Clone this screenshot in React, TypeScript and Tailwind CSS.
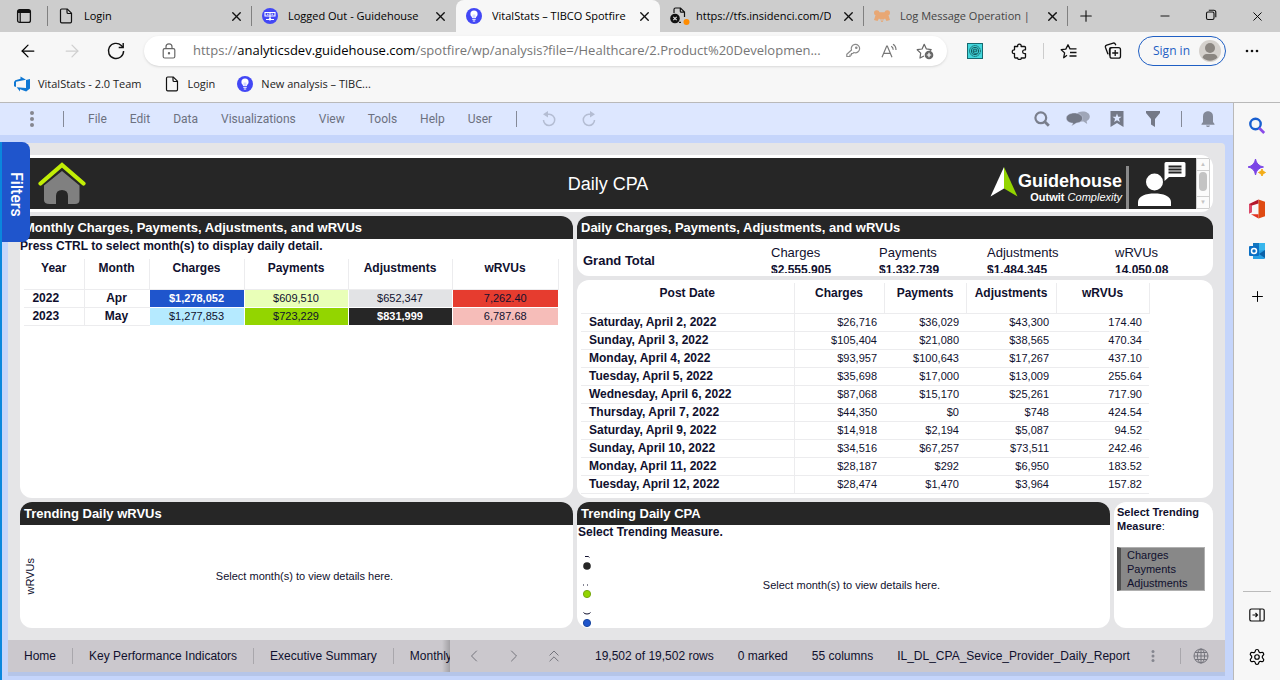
import React from "react";
import { ArrowLeft, ArrowRight, ChevronLeft, ChevronRight, ChevronsUp, Plus, Settings, X, Minus } from "lucide-react";

const UI = "font-['Open_Sans','Noto_Sans',sans-serif]";
const ARIAL = "font-['Liberation_Sans',Arial,sans-serif]";

function PageIcon() {
  return (
    <svg width="16" height="16" viewBox="0 0 16 16" fill="none" stroke="#111" strokeWidth="1.2">
      <path d="M2.5 2.2q0-1.2 1.200-1.200h5.600l4.200 4.200v8.300q0 1.300-1.200 1.300H3.700q-1.200 0-1.200-1.300z" />
      <path d="M9 1v3.200q0 1.300 1.200 1.300h3.300" />
    </svg>
  );
}

function BulbIcon() {
  return (
    <svg width="16" height="16" viewBox="0 0 16 16">
      <circle cx="8" cy="8" r="8" fill="#4247f5" />
      <path d="M8 2.600a3.600 3.600 0 0 0-3.600 3.600c0 1.800 1.600 2.300 1.700 3.900h3.800c.1-1.600 1.700-2.100 1.700-3.900A3.600 3.600 0 0 0 8 2.600z" fill="#fff" />
      <path d="M6.300 11.300h3.400M6.800 13h2.400" stroke="#fff" strokeWidth="1" />
      <path d="M7.200 9.800V6.500M8.800 9.800V6.500" stroke="#9ca0fa" strokeWidth=".6" />
    </svg>
  );
}

function NetworkIcon() {
  return (
    <svg width="16" height="16" viewBox="0 0 16 16">
      <circle cx="8" cy="8" r="8" fill="#4247f5" />
      <path d="M3 4.500h10v3.500H3zM8 4.500V11M4 11.500h8" fill="none" stroke="#fff" strokeWidth="1.100" />
      <path d="M5 6.200h1.500M9.500 6.200H11" stroke="#fff" strokeWidth="1" />
      <circle cx="8" cy="11.300" r="1.300" fill="#fff" />
    </svg>
  );
}

function BrokenPageIcon() {
  return (
    <svg width="20" height="18" viewBox="0 0 20 18" fill="none" className="-mr-1">
      <path d="M4 6V2.500Q4 1 5.500 1h5l4 4v5M10.300 1v3.200q0 1 1 1h3.200" stroke="#111" strokeWidth="1.200" />
      <path d="M9 15.400h2" stroke="#111" strokeWidth="1.200" />
      <circle cx="5" cy="11.500" r="4.800" fill="#111" />
      <path d="M3.300 9.800l3.400 3.400M6.700 9.800l-3.400 3.400" stroke="#ddd" strokeWidth="1.200" />
      <circle cx="16.500" cy="15" r="3" fill="#ff8c00" />
    </svg>
  );
}

function BearIcon() {
  return (
    <svg width="16" height="12" viewBox="0 0 16 12" fill="#e8a774">
      <path d="M0 3Q0 0 3 .3 5 .5 5.500 2.200h5Q11 .5 13 .3 16 0 16 3q0 1.700-1.500 2.300L16 10l-3.500 1-1.500-2.600-1.200 1.100H6.200L5 8.400 3.500 11 0 10l1.500-4.700Q0 4.700 0 3z" />
      <path d="M6.500 10.500h3L8.500 12h-1z" />
    </svg>
  );
}

type TabProps = { icon: React.ReactNode; title: string; active?: boolean; divider?: boolean; muted?: boolean };

function BrowserTab({ icon, title, active, divider, muted }: TabProps) {
  return (
    <div className={"relative flex h-8 min-w-0 max-w-[204px] flex-1 items-center gap-2.5 pl-2.5 pr-2 " + (active ? "rounded-t-lg bg-[#f7f7f7]" : "")}>
      <span className="flex w-4 shrink-0 justify-center">{icon}</span>
      <a href="#tab" className={"min-w-0 flex-1 overflow-hidden whitespace-nowrap text-[11px] " + (muted ? "text-[#444]" : "text-black")}>{title}</a>
      <button aria-label={"Close " + title} className="flex shrink-0"><X size={15} strokeWidth={2.2} color="#111" /></button>
      {divider && <span className="absolute right-0 top-1.5 h-5 w-px bg-[#808080]" />}
    </div>
  );
}

function TabStrip() {
  return (
    <div className="flex h-8 items-center bg-[#cdcdcd]">
      <button aria-label="Tab actions" className="flex w-[47px] shrink-0 justify-center">
        <svg width="16" height="16" viewBox="0 0 16 16" fill="none" stroke="#111">
          <rect x="1.600" y="1.600" width="12.800" height="12.800" rx="2" strokeWidth="1.300" />
          <path d="M2 3.500h12" strokeWidth="3" />
          <path d="M4.200 4v10" strokeWidth="1.200" />
        </svg>
      </button>
      <span className="h-5 w-px bg-[#808080]" />
      <div className="flex min-w-0 flex-1">
        <BrowserTab icon={<PageIcon />} title="Login" divider />
        <BrowserTab icon={<NetworkIcon />} title="Logged Out - Guidehouse" />
        <BrowserTab icon={<BulbIcon />} title="VitalStats – TIBCO Spotfire" active />
        <BrowserTab icon={<BrokenPageIcon />} title="https://tfs.insidenci.com/D" divider />
        <BrowserTab icon={<BearIcon />} title="Log Message Operation |" divider muted />
        <button aria-label="New tab" className="flex w-9 items-center justify-center"><Plus size={18} strokeWidth={1.500} color="#111" /></button>
      </div>
      <div className="flex">
        <button aria-label="Minimize" className="flex w-[46px] justify-center"><Minus size={14} strokeWidth={1.500} /></button>
        <button aria-label="Restore" className="flex w-[46px] justify-center">
          <svg width="12" height="12" viewBox="0 0 12 12" fill="none" stroke="#111" strokeWidth="1.100">
            <rect x="1.500" y="3" width="7.500" height="7.500" rx="1.500" />
            <path d="M3.800 1.200h5q2 0 2 2v5" />
          </svg>
        </button>
        <button aria-label="Close window" className="flex w-[46px] justify-center"><X size={15} strokeWidth={1.500} /></button>
      </div>
    </div>
  );
}

function AddressBar() {
  return (
    <div className="flex h-[38px] items-center pr-5">
      <button aria-label="Back" className="ml-[18px] flex w-5"><ArrowLeft size={20} strokeWidth={1.500} /></button>
      <button aria-label="Forward" className="ml-6 flex w-5"><ArrowRight size={20} strokeWidth={1.500} color="#cfcfcf" /></button>
      <button aria-label="Refresh" className="ml-6 flex w-5">
        <svg width="20" height="20" viewBox="0 0 20 20" fill="none" stroke="#111" strokeWidth="1.400">
          <path d="M17.600 10a7.600 7.600 0 1 1-2.300-5.500L17 6.300" />
          <path d="M17.200 2v4.500h-4.500" />
        </svg>
      </button>
      <div className="ml-[18px] flex h-[30px] min-w-0 flex-1 items-center rounded-full bg-white pl-[18px] pr-3 shadow-sm">
        <svg width="14" height="16" viewBox="0 0 14 16" fill="none" stroke="#666" strokeWidth="1.200">
          <rect x="1.200" y="5.600" width="11.600" height="9.400" rx="1.500" />
          <path d="M4 5.500V3.800a3 3 0 0 1 6 0v1.700" />
          <circle cx="7" cy="10.300" r=".6" fill="#666" />
        </svg>
        <a href="#address" className="ml-[17px] min-w-0 flex-1 overflow-hidden whitespace-nowrap text-[13px] text-[#767676]">
          https://<span className="text-black">analyticsdev.guidehouse.com</span>/spotfire/wp/analysis?file=/Healthcare/2.Product%20Developmen...
        </a>
        <button aria-label="Passwords" className="ml-2 flex">
          <svg width="16" height="16" viewBox="0 0 16 16" fill="none" stroke="#8a8a8a" strokeWidth="1.200">
            <path d="M6.500 7A4.200 4.200 0 1 1 9 9.500L7.800 10.500H6.500V12H5v1.500H1.800v-2.200z" />
            <circle cx="11.300" cy="4.700" r=".7" />
          </svg>
        </button>
        <button aria-label="Read aloud" className="ml-5 flex">
          <svg width="17" height="16" viewBox="0 0 17 16" fill="none" stroke="#777" strokeWidth="1.200">
            <path d="M1 14.200L5.700 3h.6L11 14.200M2.700 10.300h6.600M10.200 3.200q2 1 2 3.600M12 1.300q3 1.700 3 5.700" />
          </svg>
        </button>
        <button aria-label="Add to favorites" className="ml-[18px] flex">
          <svg width="19" height="18" viewBox="0 0 19 18" fill="none" stroke="#666" strokeWidth="1.200">
            <path d="M8 14l-4 2 .7-4.900L1.200 7.700l4.900-.7L8.200 2.300l2.200 4.600 4.800.7-1.300 1.500" strokeLinejoin="round" />
            <circle cx="13" cy="13" r="4.300" fill="#666" stroke="none" />
            <path d="M13 10.800v4.400M10.800 13h4.400" stroke="#fff" />
          </svg>
        </button>
      </div>
      <button aria-label="Extension" className="ml-5 flex">
        <svg width="16" height="16" viewBox="0 0 16 16">
          <rect x=".5" y=".5" width="15" height="15" fill="#42d7dc" stroke="#166a70" />
          <g fill="none" stroke="#13595e" strokeWidth="1">
            <circle cx="8" cy="8" r="5.400" strokeDasharray="1.500 .6" />
            <circle cx="8" cy="8" r="3.700" />
            <path d="M6 8.200h4q0-2.200-2-2.200t-2 2.200 2.200 2.100h1.600" />
          </g>
        </svg>
      </button>
      <button aria-label="Extensions" className="ml-7 flex">
        <svg width="17" height="17" viewBox="0 0 17 17" fill="none" stroke="#111" strokeWidth="1.300" strokeLinejoin="round">
          <path d="M3.500 3.500h3.200q-.5-2.300 1.700-2.300t1.700 2.300h3.400q1 0 1 1v2.300h-1q-1.900.1-1.900 1.900t1.900 1.900h1v3.400q0 1-1 1h-3.300q.4 1.500-1.700 1.500t-1.800-1.500H4.500q-1 0-1-1v-3.500Q1.300 10.800 1.300 8.700t2.200-1.900z" />
        </svg>
      </button>
      <span className="ml-[15px] h-4 w-px bg-[#ccc]" />
      <button aria-label="Favorites" className="ml-4 flex">
        <svg width="18" height="17" viewBox="0 0 18 17" fill="none" stroke="#111" strokeWidth="1.300">
          <path d="M7 12.200L3.700 14.700l.9-4.800L1.200 6.700l4.600-.6L8 1.800l2 4.100h6.500M10 9.500h6.500M9.500 13h7" strokeLinejoin="round" />
        </svg>
      </button>
      <button aria-label="Collections" className="ml-[26px] flex">
        <svg width="18" height="18" viewBox="0 0 18 18" fill="none" stroke="#111" strokeWidth="1.300">
          <path d="M4 12.300L1.500 5.500q-.6-1.800 1.200-2.400l6.500-2q1.600-.4 2.200 1.200l.4 1M5.500 13.500v-6q0-1.800 1.800-1.800h1" />
          <rect x="6" y="5.700" width="10.500" height="10.500" rx="2" />
          <path d="M11.200 8v6M8.200 11h6" />
        </svg>
      </button>
      <button className="ml-4 flex h-[30px] w-[88px] items-center justify-between rounded-full border border-[#1f5fc4] pl-3.5 pr-1 text-xs text-[#1f5fc4]">
        Sign in
        <svg width="22" height="22" viewBox="0 0 22 22">
          <circle cx="11" cy="11" r="11" fill="#d5d1cd" />
          <circle cx="11" cy="8" r="5" fill="#8b8681" />
          <path d="M3.500 17.500q1-3.500 4-3.500h7q3 0 4 3.500a10.500 10.500 0 0 1-15 0z" fill="#8b8681" />
        </svg>
      </button>
      <button aria-label="More" className="ml-[18px] flex">
        <svg width="16" height="4" viewBox="0 0 16 4" fill="#111"><circle cx="3" cy="2" r="1.300" /><circle cx="8" cy="2" r="1.300" /><circle cx="13" cy="2" r="1.300" /></svg>
      </button>
    </div>
  );
}

function Bookmarks() {
  return (
    <div className="flex h-[32px] items-start gap-[22px] pl-3.5 pt-1.5 text-[11px] leading-4 text-[#222]">
      <a href="#team" className="flex items-center gap-2">
        <svg width="16" height="16" viewBox="0 0 16 16" fill="#0f78d4">
          <path d="M16 3v9.400L12.200 15.500 6 13.300v2.200L2.700 11.300 12 12V3.900zM12 3.800L6.500 .4V2.700L1.300 4.200 0 6v4.200l2 .9V5.700z" />
        </svg>
        VitalStats - 2.0 Team
      </a>
      <a href="#login" className="flex items-center gap-2"><PageIcon />Login</a>
      <a href="#analysis" className="flex items-center gap-2"><BulbIcon />New analysis – TIBC...</a>
    </div>
  );
}

const menus = ["File", "Edit", "Data", "Visualizations", "View", "Tools", "Help", "User"];

function Dots() {
  return (
    <svg width="6" height="18" viewBox="0 0 6 18" fill="#85868f"><circle cx="3" cy="3" r="2" /><circle cx="3" cy="9" r="2" /><circle cx="3" cy="15" r="2" /></svg>
  );
}

function UndoIcon({ flip }: { flip?: boolean }) {
  return (
    <svg width="16" height="16" viewBox="0 0 16 16" className={flip ? "-scale-x-100" : ""}>
      <path d="M6 3.300h2.200a5.600 5.600 0 1 1-5.700 5.600" fill="none" stroke="#b4bdd3" strokeWidth="1.500" />
      <path d="M7 0v6.500L2 3.300z" fill="#b4bdd3" />
    </svg>
  );
}

function MenuBar() {
  return (
    <div className="flex h-8 items-center bg-[#dde7ff] pl-[29px] pr-[17px] font-['Roboto',sans-serif] text-xs text-[#6c7180]">
      <button aria-label="Menu" className="flex"><Dots /></button>
      <span className="ml-7 h-4 w-px bg-[#858a98]" />
      <nav className="ml-6 flex gap-[23px]">
        {menus.map((m) => <button key={m}>{m}</button>)}
      </nav>
      <span className="ml-6 h-4 w-px bg-[#858a98]" />
      <button aria-label="Undo" className="ml-6 flex"><UndoIcon /></button>
      <button aria-label="Redo" className="ml-6 flex"><UndoIcon flip /></button>
      <div className="ml-auto flex items-center">
        <button aria-label="Search">
          <svg width="16" height="16" viewBox="0 0 16 16" fill="none" stroke="#7a7f8d"><circle cx="6.800" cy="6.800" r="5.400" strokeWidth="2.200" /><path d="M10.800 10.800l4 4" strokeWidth="2.800" /></svg>
        </button>
        <button aria-label="Comments" className="ml-4">
          <svg width="24" height="16" viewBox="0 0 24 16">
            <path d="M16.500.5c4.200 0 7.300 2 7.300 5 0 2-1.300 3.600-3.200 4.400l.6 3.200-3.700-2.600H14L10.500 3q1.500-2.500 6-2.500z" fill="#9fa6b8" />
            <path d="M8.300 2C4 2 .3 4.200.3 7.200s3.300 4.700 6.700 5L5.500 15l5-3c4-.4 6-2.200 6-4.800 0-3-4-5.200-8.200-5.200z" fill="#747987" stroke="#dde7ff" strokeWidth=".4" />
          </svg>
        </button>
        <button aria-label="Bookmarks" className="ml-5">
          <svg width="14" height="16" viewBox="0 0 14 16" fill="#747987"><path d="M.5 0h13v16L7 12 .5 16z" /><path d="M7 2.500l1.200 3.200 3.400.1-2.700 2 1 3.300L7 9.200l-2.900 1.900 1-3.300-2.700-2 3.400-.1z" fill="#dde7ff" /></svg>
        </button>
        <button aria-label="Filters panel" className="ml-[22px]">
          <svg width="14" height="16" viewBox="0 0 14 16" fill="#747987"><path d="M0 0h14v2L9 8v8l-4-2.500V8L0 2z" /></svg>
        </button>
        <span className="ml-[21px] h-4 w-px bg-[#858a98]" />
        <button aria-label="Notifications" className="ml-[18px]">
          <svg width="16" height="16" viewBox="0 0 16 16" fill="#838998"><path d="M7 .3h2q4 .8 4 5.200V11l1.500 2v.7h-13V13L3 11V5.500Q3 1.100 7 .3zM6 14.500h4q-.4 1.500-2 1.500t-2-1.500z" /></svg>
        </button>
      </div>
    </div>
  );
}

function HeaderPanel() {
  return (
    <header className="flex overflow-hidden rounded-r-xl bg-white py-[3px] pr-[3px]">
      <div className="grid h-[51px] flex-1 grid-cols-[1fr_auto_1fr] items-center bg-[#262626]">
        <a href="#home" aria-label="Home" className="ml-[18px] w-12">
          <svg width="48" height="44" viewBox="0 0 48 44">
            <path d="M24 9L41.500 23.500v14.500q0 4-4.500 4h-7V34q0-6-6-6t-6 6v8h-6.500Q6 42 6 38V23.500z" fill="#808080" />
            <path d="M2.500 21.500L24 3l21.500 18.500" fill="none" stroke="#c2ee06" strokeWidth="4.200" strokeLinecap="round" strokeLinejoin="miter" />
          </svg>
        </a>
        <h1 className="text-lg text-white">Daily CPA</h1>
        <div className="flex h-full items-center justify-end pr-2.5 text-white">
          <svg width="28" height="30" viewBox="0 0 28 30" className="mb-1">
            <path d="M14 0v21.500L.5 29.500z" fill="#fff" />
            <path d="M14 0l13.500 29.500L14 21.500z" fill="#93d500" />
          </svg>
          <div className="mt-1.5 text-right">
            <div className="text-lg leading-5 font-bold">Guidehouse</div>
            <div className="text-[11px] leading-3 whitespace-nowrap"><b>Outwit</b> <i>Complexity</i></div>
          </div>
          <span className="ml-1 mt-2 w-[3px] self-stretch bg-[#8a8a8a]" />
          <a href="#contact" aria-label="Contact" className="ml-2">
            <svg width="49" height="46" viewBox="0 0 49 46" fill="#fff">
              <circle cx="17.500" cy="21" r="8.500" />
              <path d="M1 45v-4c0-6 8-8.500 16.500-8.500S34 35 34 41v4z" />
              <path d="M29 1h18q1.500 0 1.500 1.500v12q0 1.500-1.500 1.500H32l-4.500 4V2.500Q27.500 1 29 1z" />
              <path d="M31.500 5.500h13M31.500 8.500h13M31.500 11.500h13" stroke="#262626" strokeWidth="1.800" />
            </svg>
          </a>
        </div>
      </div>
      <div className="flex w-3.5 flex-col items-center border border-[#cfcfcf] bg-[#fbfbfb]" aria-hidden="true">
        <span className="flex h-3 w-full items-center justify-center border-b border-[#cfcfcf] text-[6px] text-[#c4c4c4]">▲</span>
        <span className="my-px w-2 flex-1 rounded-full bg-[#c4c4c4]" />
        <span className="mt-1 flex h-3 w-full items-center justify-center border-t border-[#cfcfcf] text-[6px] text-[#c4c4c4]">▼</span>
      </div>
    </header>
  );
}

function TitleBar({ children }: { children: React.ReactNode }) {
  return <h2 className="h-[23px] shrink-0 bg-[#262626] pl-1 text-[13px] leading-[23px] font-bold whitespace-nowrap text-white">{children}</h2>;
}

function MonthlyPanel() {
  const num = "border-l border-t border-white text-center text-[11px] p-0";
  const key = "border-b border-l border-[#ececee] text-center text-xs font-bold p-0 first:border-l-0";
  return (
    <section className="flex flex-col overflow-hidden rounded-xl bg-white">
      <TitleBar>Monthly Charges, Payments, Adjustments, and wRVUs</TitleBar>
      <p className="text-xs leading-[14px] font-bold">Press CTRL to select month(s) to display daily detail.</p>
      <table className="mt-1.5 ml-1 w-[534px] table-fixed border-collapse">
        <colgroup>
          <col className="w-[60px]" /><col className="w-[65px]" /><col className="w-[95px]" /><col className="w-[104px]" /><col className="w-[104px]" /><col className="w-[106px]" />
        </colgroup>
        <thead>
          <tr className="h-[30px] align-top text-xs">
            {["Year", "Month", "Charges", "Payments", "Adjustments", "wRVUs"].map((h) => (
              <th key={h} scope="col" className="border-r border-b border-[#ececee] p-0 leading-[18px] font-bold">{h}</th>
            ))}
          </tr>
        </thead>
        <tbody>
          <tr className="h-[18px]">
            <th scope="row" className={key + " pr-4"}>2022</th><th scope="row" className={key}>Apr</th>
            <td className={num + " bg-[#1f55cc] font-bold text-white"}>$1,278,052</td>
            <td className={num + " bg-[#e9ffb8]"}>$609,510</td>
            <td className={num + " bg-[#e2e3e5]"}>$652,347</td>
            <td className={num + " bg-[#e63c2f]"}>7,262.40</td>
          </tr>
          <tr className="h-[18px]">
            <th scope="row" className={key + " pr-4"}>2023</th><th scope="row" className={key}>May</th>
            <td className={num + " bg-[#b5eaff]"}>$1,277,853</td>
            <td className={num + " bg-[#93d500]"}>$723,229</td>
            <td className={num + " bg-[#262626] font-bold text-white"}>$831,999</td>
            <td className={num + " bg-[#f6bdb9]"}>6,787.68</td>
          </tr>
        </tbody>
      </table>
    </section>
  );
}

const daily = [
  ["Saturday, April 2, 2022", "$26,716", "$36,029", "$43,300", "174.40"],
  ["Sunday, April 3, 2022", "$105,404", "$21,080", "$38,565", "470.34"],
  ["Monday, April 4, 2022", "$93,957", "$100,643", "$17,267", "437.10"],
  ["Tuesday, April 5, 2022", "$35,698", "$17,000", "$13,009", "255.64"],
  ["Wednesday, April 6, 2022", "$87,068", "$15,170", "$25,261", "717.90"],
  ["Thursday, April 7, 2022", "$44,350", "$0", "$748", "424.54"],
  ["Saturday, April 9, 2022", "$14,918", "$2,194", "$5,087", "94.52"],
  ["Sunday, April 10, 2022", "$34,516", "$67,257", "$73,511", "242.46"],
  ["Monday, April 11, 2022", "$28,187", "$292", "$6,950", "183.52"],
  ["Tuesday, April 12, 2022", "$28,474", "$1,470", "$3,964", "157.82"],
];

function DailyPanels() {
  return (
    <div className="flex min-w-0 flex-col gap-1">
      <section className="overflow-hidden rounded-xl bg-white">
        <TitleBar>Daily Charges, Payments, Adjustments, and wRVUs</TitleBar>
        <div className="flex h-[37px] items-start pl-1.5">
          <span className="mt-3 w-[188px] text-[13px] leading-5 font-bold">Grand Total</span>
          <dl className="grid h-[34px] flex-1 grid-cols-[108px_108px_128px_1fr] overflow-hidden pt-1.5">
            {[["Charges", "$2,555,905"], ["Payments", "$1,332,739"], ["Adjustments", "$1,484,345"], ["wRVUs", "14,050.08"]].map(([k, v]) => (
              <div key={k}><dt className="text-[13px] leading-4">{k}</dt><dd className="text-xs leading-[18px] font-bold">{v}</dd></div>
            ))}
          </dl>
        </div>
      </section>
      <section className="flex-1 overflow-hidden rounded-xl bg-white pt-[3px] pl-1">
        <table className="w-[568px] table-fixed border-collapse">
          <colgroup>
            <col className="w-[213px]" /><col className="w-[90px]" /><col className="w-[82px]" /><col className="w-[90px]" /><col className="w-[93px]" />
          </colgroup>
          <thead>
            <tr className="h-[30px] align-top text-xs">
              {["Post Date", "Charges", "Payments", "Adjustments", "wRVUs"].map((h) => (
                <th key={h} scope="col" className="border-r border-b border-[#ececee] p-0 leading-5 font-bold">{h}</th>
              ))}
            </tr>
          </thead>
          <tbody>
            {daily.map((r) => (
              <tr key={r[0]} className="h-[18px] border-b border-[#ececee]">
                <th scope="row" className="border-r border-[#ececee] p-0 pl-2 text-left text-xs leading-4 font-bold">{r[0]}</th>
                {r.slice(1).map((v, i) => <td key={i} className="p-0 pr-[7px] text-right text-[11px] leading-4">{v}</td>)}
              </tr>
            ))}
          </tbody>
        </table>
      </section>
    </div>
  );
}

function TrendingPanels() {
  return (
    <>
      <section className="flex flex-col overflow-hidden rounded-xl bg-white">
        <TitleBar>Trending Daily wRVUs</TitleBar>
        <div className="flex flex-1 items-center pl-1">
          <span className="rotate-180 text-[11px] leading-3 [writing-mode:vertical-rl]">wRVUs</span>
          <p className="flex-1 text-center text-[11px]">Select month(s) to view details here.</p>
        </div>
      </section>
      <div className="flex min-w-0 gap-1">
        <section className="flex min-w-0 flex-1 flex-col overflow-hidden rounded-xl bg-white">
          <TitleBar>Trending Daily CPA</TitleBar>
          <p className="pl-px text-xs leading-[14px] font-bold">Select Trending Measure.</p>
          <div className="flex flex-1 items-center pl-1">
            <svg width="12" height="76" viewBox="0 0 12 76" className="mt-2.5 shrink-0">
              <path d="M4 5.500h3.500l.8 1" fill="none" stroke="#10102e" />
              <circle cx="6" cy="15" r="3.800" fill="#262626" />
              <path d="M2 34h1M6 34h1" stroke="#10102e" />
              <circle cx="6" cy="43" r="3.600" fill="#93d500" stroke="#78a812" />
              <path d="M2.500 61.500q1 1.500 3.500 1.500t3.500-1.500" fill="none" stroke="#10102e" />
              <circle cx="6" cy="72" r="3.600" fill="#1f55cc" stroke="#1b479f" />
            </svg>
            <p className="flex-1 pt-1 text-center text-[11px]">Select month(s) to view details here.</p>
          </div>
        </section>
        <section className="w-[99px] rounded-xl bg-white px-[3px] pt-[3px]">
          <label htmlFor="measure" className="block pb-3.5 text-[11px] leading-[14px]"><b>Select Trending</b><br /><b>Measure</b>:</label>
          <select id="measure" multiple size={3} className="block h-11 w-[88px] appearance-none overflow-hidden border border-l-4 border-[#b0b0b0] border-l-[#505050] bg-[#888] text-[11px] text-[#10102e] outline-none">
            {["Charges", "Payments", "Adjustments"].map((o) => <option key={o} className="flex h-3.5 items-center p-0 pl-1.5 text-[11px]">{o}</option>)}
          </select>
        </section>
      </div>
    </>
  );
}

function StatusBar() {
  return (
    <footer className="flex h-8 items-center bg-[#cbc8cd] text-xs whitespace-nowrap shadow-[0_4px_0_#b5c5e8]">
      <nav className="relative flex h-full w-[442px] items-center overflow-hidden">
        {["Home", "Key Performance Indicators", "Executive Summary", "Monthly CPA"].map((t) => (
          <a key={t} href="#page" className="shrink-0 border-r border-[#a9a7ac] px-4">{t}</a>
        ))}
        <span className="absolute inset-y-0 right-0 w-2 bg-linear-to-r from-transparent to-black/20" />
      </nav>
      <button aria-label="Previous page" className="ml-3.5"><ChevronLeft size={20} strokeWidth={1.200} color="#74747c" /></button>
      <button aria-label="Next page" className="ml-5"><ChevronRight size={20} strokeWidth={1.200} color="#74747c" /></button>
      <button aria-label="Expand pages" className="ml-5"><ChevronsUp size={20} strokeWidth={1.200} color="#74747c" /></button>
      <div className="ml-[31px] flex gap-6"><span>19,502 of 19,502 rows</span><span>0 marked</span><span>55 columns</span><span>IL_DL_CPA_Sevice_Provider_Daily_Report</span></div>
      <button aria-label="Data options" className="ml-auto scale-75"><Dots /></button>
      <span className="ml-6 h-4 w-px bg-[#a9a7ac]" />
      <button aria-label="Language" className="mr-4 ml-3">
        <svg width="16" height="16" viewBox="0 0 16 16" fill="none" stroke="#74747c" strokeWidth="1">
          <circle cx="8" cy="8" r="7" />
          <ellipse cx="8" cy="8" rx="3.600" ry="7" />
          <path d="M8 1v14M1 8h14M2 4.500h12M2 11.500h12" />
        </svg>
      </button>
    </footer>
  );
}

function SideBar() {
  return (
    <aside className="flex w-[47px] shrink-0 flex-col items-center border-l border-[#b9b9b9] bg-[#f7f7f7]">
      <button aria-label="Search" className="mt-3.5">
        <svg width="18" height="18" viewBox="0 0 18 18" fill="none"><circle cx="7.500" cy="7" r="5.200" stroke="#185fd0" strokeWidth="2.400" /><path d="M11.200 11l5 5" stroke="#8a4be8" strokeWidth="2.600" /></svg>
      </button>
      <button aria-label="Discover" className="mt-6">
        <svg width="18" height="18" viewBox="0 0 18 18"><path d="M7.500 0Q8.500 6.500 15.500 8 8.500 9 7.500 16 6.500 9 0 8 6.500 6.500 7.500 0z" fill="#7b45e6" stroke="#7b45e6" strokeLinejoin="round" /><path d="M14 10q.6 3 3.500 3.500-2.900.5-3.500 3.500-.6-3-3.500-3.500 2.900-.5 3.500-3.500z" fill="#f3ad19" stroke="#f3ad19" /></svg>
      </button>
      <button aria-label="Office" className="mt-[22px]">
        <svg width="18" height="20" viewBox="0 0 18 20"><path d="M10.500.500L17 2.800v14.400l-6.500 2.300z" fill="#df4a12" /><path d="M10.500.500L1 5v9.500L4 13V6.500l6.500-2z" fill="#b5172b" /><path d="M1 5l3 1.500V13l-3 1.500z" fill="#dc4a6a" /><path d="M3 15.200h7.500v4.300z" fill="#e3301f" /></svg>
      </button>
      <button aria-label="Outlook" className="mt-[23px]">
        <svg width="18" height="18" viewBox="0 0 18 18"><path d="M5 1h12v15H5z" fill="#38b6ec" /><path d="M5 1h6v4H5z" fill="#1276c0" /><path d="M5 9l12-1v8q0 1-1 1H5z" fill="#28a0e4" /><path d="M17 8l-6 4 6 4z" fill="#0b62a8" /><rect x="1" y="4" width="10" height="10" rx="1" fill="#0b6fc4" /><circle cx="6" cy="9" r="2.500" fill="none" stroke="#fff" strokeWidth="1.500" /></svg>
      </button>
      <button aria-label="Add" className="mt-7"><Plus size={17} strokeWidth={1.400} /></button>
      <span className="mt-auto h-px w-7 bg-[#bbb]" />
      <button aria-label="Hide sidebar" className="mt-4">
        <svg width="16" height="14" viewBox="0 0 16 14" fill="none" stroke="#111" strokeWidth="1.200"><rect x=".8" y="1" width="14.400" height="12" rx="1.600" /><path d="M11 1v12M3.500 7h5M6.500 5l2 2-2 2" /></svg>
      </button>
      <button aria-label="Settings" className="mt-[26px] mb-3.5"><Settings size={18} strokeWidth={1.600} /></button>
    </aside>
  );
}

export default function App() {
  return (
    <div className={"flex min-h-screen flex-col bg-[#f7f7f7] " + UI}>
      <TabStrip />
      <AddressBar />
      <Bookmarks />
      <div className="flex flex-1 border-t border-[#b9b9b9]">
        <div className="flex min-w-0 flex-1 flex-col bg-[#c5d5fb]">
          <MenuBar />
          <div className={"relative mt-[7px] flex flex-1 flex-col border-l-2 border-[#0a87dd] pt-px pr-2 pb-2 pl-1.5 text-[#10102e] " + ARIAL}>
            <main className="flex flex-1 flex-col gap-1 rounded-t-sm bg-[#e5e5e7] px-3 py-3">
              <HeaderPanel />
              <div className="grid flex-1 grid-cols-[553fr_636fr] grid-rows-[1fr_126px] gap-1">
                <MonthlyPanel />
                <DailyPanels />
                <TrendingPanels />
              </div>
            </main>
            <StatusBar />
            <button className="absolute top-0 left-0 flex h-[100px] w-7 items-center justify-center rounded-r-lg bg-[#1f55cc] pt-1 font-['Roboto',sans-serif] text-base font-medium text-white [writing-mode:vertical-rl]">Filters</button>
          </div>
        </div>
        <SideBar />
      </div>
    </div>
  );
}
